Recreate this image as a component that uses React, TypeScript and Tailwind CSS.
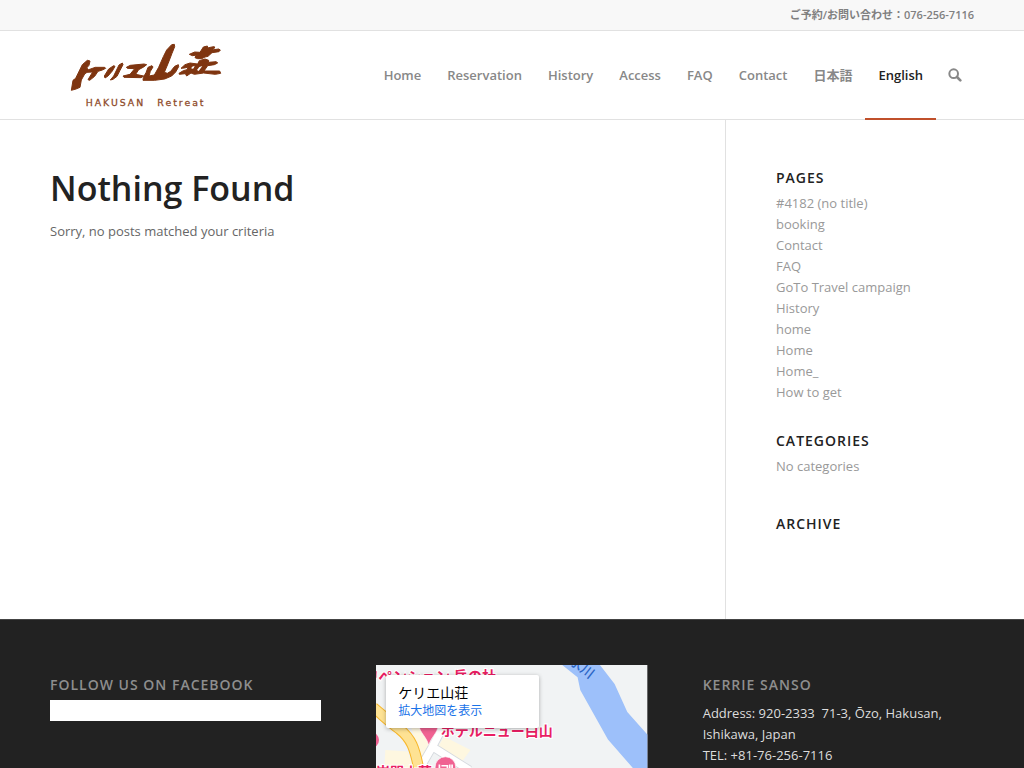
import React from "react";

const navItems = ["Home", "Reservation", "History", "Access", "FAQ", "Contact", "日本語", "English"];

const pages = [
  "#4182 (no title)",
  "booking",
  "Contact",
  "FAQ",
  "GoTo Travel campaign",
  "History",
  "home",
  "Home",
  "Home_",
  "How to get",
];

function Logo() {
  return (
    <svg viewBox="0 3 570 264" className="block h-[88px] w-[190px]" role="img" aria-label="Kerrie Sanso, Hakusan Retreat">
      <g fill="#7f3510" stroke="#7f3510" strokeWidth="3" strokeLinejoin="round">
        <path d="M64 181L69 151L77 145L97 104L112 91L120 93L117 106L110 114L116 119L136 112L164 112L167 115L157 120L144 124L134 139L119 151L114 149L128 126L111 127L104 132L94 150L90 172L78 177Z" />
        <path d="M163 138L176 117L191 107L195 109L187 123L174 138L165 144Z" />
        <path d="M181 150L191 138L207 105L217 99L219 104L210 121L201 139L189 148Z" />
        <path d="M229 112L241 106L282 102L290 104L281 111L266 119L257 133L281 138L273 143L222 142L219 138L240 133L254 116L232 115Z" />
        <path d="M279 151L280 142L288 128L294 112L306 107L309 111L301 124L297 138L313 135L326 112L340 80L350 60L365 44L373 43L374 50L366 70L354 101L343 127L352 130L362 124L374 109L385 104L386 110L377 126L365 138L344 147L314 151Z" />
        <path d="M393 115L405 104L420 99L443 102L448 92L465 87L476 91L475 97L499 95L503 99L493 104L473 107L462 123L509 123L512 130L496 133L461 129L433 133L423 129L410 138L406 131L388 133L387 130L400 122L411 119L414 111L404 114Z" />
        <path d="M418 73L434 66L450 67L460 51L472 48L473 54L485 51L493 50L494 54L485 60L506 57L511 60L507 65L486 68L474 79L465 81L455 86L443 86L435 83L437 78L444 75L427 77Z" />
      </g>
      <path d="M425 111L434 107L431 115L425 117ZM448 111L457 108L446 123L441 120Z" fill="#fff" />
      <g fill="#8d4a29" stroke="#8d4a29" strokeWidth="0.8" fontSize="28" letterSpacing="6" fontFamily="DejaVu Sans, sans-serif">
        <text x="107" y="228">HAKUSAN</text>
        <text x="322" y="228">Retreat</text>
      </g>
    </svg>
  );
}

function SearchIcon() {
  return (
    <svg viewBox="0 0 42 42" className="size-[14px]" aria-hidden="true">
      <circle cx="17" cy="17" r="13" fill="none" stroke="#888" strokeWidth="6" />
      <path d="M27 27L37 37" stroke="#888" strokeWidth="8" strokeLinecap="round" />
    </svg>
  );
}

function MapDrawing() {
  return (
    <svg viewBox="0 15 813 309" preserveAspectRatio="xMinYMin slice" className="block h-full w-full" aria-hidden="true">
      <rect y="15" width="813" height="309" fill="#f1f3f4" />
      <path d="M558 15L604 52L612 90L695 238L770 324H813V223L753 156L715 72L671 15Z" fill="#9dc0fa" />
      <path d="M28 270L95 274L111 324H25Z" fill="#fef7e0" />
      <path d="M106 204H160L153 285L137 303L124 259Z" fill="#fef7e0" />
      <path d="M204 229L283 270L257 306L183 266Z" fill="#fef7e0" />
      <g fill="none">
        <path d="M202 198L169 260L132 324M169 260L280 330" stroke="#d5d9de" strokeWidth="27" />
        <path d="M202 198L169 260L132 324M169 260L280 330" stroke="#fff" strokeWidth="22" />
        <path d="M-8 142C25 170 40 185 70 207C105 235 116 261 130 335" stroke="#f7b72c" strokeWidth="33" />
        <path d="M-8 142C25 170 40 185 70 207C105 235 116 261 130 335" stroke="#fee293" strokeWidth="27" />
      </g>
      <path d="M128 195C132 220 151 229 158 256C166 229 184 221 187 195Z" fill="#f06292" stroke="#fff" strokeWidth="2" />
      <circle cx="-15" cy="240" r="24" fill="#f06292" />
      <circle cx="208" cy="321" r="31" fill="#f06292" stroke="#fff" strokeWidth="2" />
      <path d="M190 313V330M196 317H214V330M221 313V330M228 313V330" fill="none" stroke="#fff" strokeWidth="5" />
      <g fill="#e91e63" stroke="#fff" strokeWidth="6" paintOrder="stroke" fontWeight="700" fontFamily="Noto Sans CJK JP, sans-serif">
        <text x="7" y="65" fontSize="43">ペンション 岳の杜</text>
        <text x="194" y="228" fontSize="42">ホテルニュー白山</text>
        <text x="0" y="350" fontSize="42">岩間山荘</text>
        <path d="M-2 34L2 33L1 53L-4 57Z" strokeWidth="2" />
      </g>
      <g transform="translate(634 31) rotate(38)" fill="#2b65c5" fontFamily="Noto Sans CJK JP, sans-serif" fontSize="40" fontWeight="500">
        <text x="-58" y="17">水川</text>
      </g>
    </svg>
  );
}

function WidgetTitle({ children, muted = false }: { children: React.ReactNode; muted?: boolean }) {
  return (
    <h3 className={`text-[14px] leading-4 font-semibold tracking-[1px] uppercase ${muted ? "text-[#8e8e8e]" : "text-[#222]"}`}>
      {children}
    </h3>
  );
}

export default function App() {
  return (
    <div className="min-h-screen bg-white font-['Open_Sans','Noto_Sans_CJK_JP',sans-serif] text-[13px] leading-[21px] text-[#666]">
      <div className="flex h-[31px] items-center justify-end border-b border-[#e1e1e1] bg-[#f8f8f8] px-[50px] pb-0.5 text-[11px] font-semibold text-[#808080]">
        <p>ご予約/お問い合わせ：076-256-7116</p>
      </div>

      <header className="flex h-[89px] justify-between border-b border-[#e1e1e1] px-[50px]">
        <a href="#home" aria-label="Kerrie Sanso home">
          <Logo />
        </a>
        <nav className="flex" aria-label="Main">
          {navItems.map((item) => (
            <a
              key={item}
              href={`#${item}`}
              className={
                item === "English"
                  ? "-mb-px flex items-center border-y-2 border-t-transparent border-b-[#c0502b] px-[13px] font-semibold text-[#222]"
                  : "-mb-px flex items-center border-y-2 border-transparent px-[13px] font-semibold text-[#888]"
              }
            >
              {item}
            </a>
          ))}
          <button type="button" aria-label="Search" className="flex items-center px-3">
            <SearchIcon />
          </button>
        </nav>
      </header>

      <div className="flex min-h-[499px] px-[50px]">
        <main className="flex-1 pt-[45px]">
          <h1 className="text-[34px] leading-[46px] font-semibold text-[#222]">Nothing Found</h1>
          <p className="pt-[10px]">Sorry, no posts matched your criteria</p>
        </main>
        <aside className="flex w-[249px] flex-col border-l border-[#e1e1e1] pt-[50px] pb-10 pl-[50px] text-[#999]">
          <section>
            <WidgetTitle>Pages</WidgetTitle>
            <ul className="pt-[7px]">
              {pages.map((page) => (
                <li key={page}>
                  <a href={`#${page}`}>{page}</a>
                </li>
              ))}
            </ul>
          </section>
          <section className="pt-[30px]">
            <WidgetTitle>Categories</WidgetTitle>
            <p className="pt-[7px]">No categories</p>
          </section>
          <section className="pt-[39px]">
            <WidgetTitle>Archive</WidgetTitle>
          </section>
        </aside>
      </div>

      <footer className="grid grid-cols-3 gap-[55px] border-t border-[#444] bg-[#222] px-[50px] pt-[45px] text-[#ddd]">
        <section className="pt-3">
          <WidgetTitle muted>Follow us on Facebook</WidgetTitle>
          <div className="mt-[7px] h-[21px] bg-white" />
        </section>
        <section className="relative h-[103px] overflow-hidden" aria-label="Map">
          <MapDrawing />
          <div className="absolute top-[10px] left-[10px] h-[53px] w-[153px] rounded-[2px] bg-white px-3 pt-[7px] font-['Noto_Sans_CJK_JP',sans-serif] shadow-[0_1px_4px_rgba(0,0,0,0.3)]">
            <p className="text-[14px] leading-5 text-black">ケリエ山荘</p>
            <a href="#map" className="block text-[12px] leading-4 text-[#1a73e8]">拡大地図を表示</a>
          </div>
        </section>
        <section className="pt-3">
          <WidgetTitle muted>Kerrie Sanso</WidgetTitle>
          <address className="pt-[10px] not-italic">
            Address: 920-2333&nbsp; 71-3, Ōzo, Hakusan, Ishikawa, Japan
            <br />
            TEL: +81-76-256-7116
          </address>
        </section>
      </footer>
    </div>
  );
}
